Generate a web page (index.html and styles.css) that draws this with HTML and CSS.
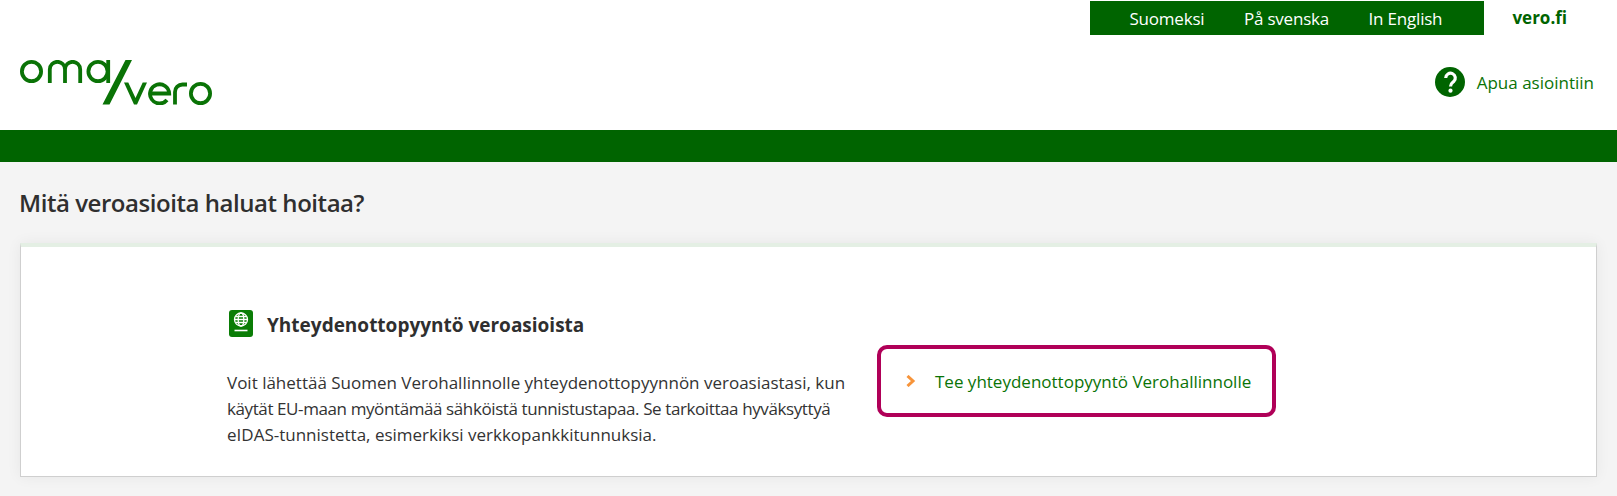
FILE: index.html
```html
<!DOCTYPE html>
<html lang="fi">
<head>
<meta charset="utf-8">
<title>OmaVero</title>
<link rel="stylesheet" href="styles.css">
</head>
<body>
<header class="header">
  <div class="topbar">
    <nav class="langs">
      <a href="#">Suomeksi</a>
      <a href="#">På svenska</a>
      <a href="#">In English</a>
    </nav>
    <a class="vero" href="#">vero.fi</a>
  </div>
  <div class="brandrow">
    <svg class="logo" viewBox="0 0 192 45" role="img" aria-label="OmaVero">
      <g fill="none" stroke="#0a7306" stroke-width="3.8">
        <circle cx="11.5" cy="11.5" r="9.6"/>
        <path d="M29.800 23V9.400a7.600 7.600 0 0 1 15.200 0V23M45 9.400a7.600 7.600 0 0 1 15.200 0V23"/>
        <circle cx="78" cy="11.500" r="9.600"/>
        <path d="M88.200 0V23"/>
        <path d="M130 33.500H149.200A9.600 9.600 0 1 0 147 40"/>
        <path d="M155 44.500V32a7.500 7.500 0 0 1 7.500-7.500H167"/>
        <circle cx="180.500" cy="33.500" r="9.600"/>
      </g>
      <path d="M105.500 0h6.500L89.500 44.500h-7zM104 22.500h4.300L115.500 38l7.200-15.500H127L117 44.500h-3z" fill="#0a7306"/>
    </svg>
    <a class="help" href="#">
      <svg class="help-icon" viewBox="0 0 30 30" aria-hidden="true">
        <circle cx="15" cy="15" r="15" fill="#006400"/>
        <path d="M10.700 11a4.800 4.800 0 1 1 8 3.600c-1.700 1.400-3.200 2.200-3.200 4.900" fill="none" stroke="#fff" stroke-width="3.200"/>
        <circle cx="15.500" cy="23.700" r="2.100" fill="#fff"/>
      </svg>
      <span>Apua asiointiin</span>
    </a>
  </div>
  <div class="band"></div>
</header>
<main class="main">
  <h1 class="heading">Mitä veroasioita haluat hoitaa?</h1>
  <section class="card">
    <div class="content">
      <div class="info">
        <h2 class="title">
          <svg class="passport" viewBox="0 0 24 27" aria-hidden="true">
            <rect width="24" height="27" rx="3" fill="#0a7d06"/>
            <g fill="none" stroke="#fff" stroke-width="1.300">
              <circle cx="12" cy="9.500" r="6.500"/>
              <ellipse cx="12" cy="9.500" rx="2.800" ry="6.500"/>
              <path d="M5.500 9.500h13M6.500 6.500h11M6.500 12.500h11"/>
            </g>
            <path d="M5.500 20.500h13" stroke="#fff" stroke-width="1.600"/>
          </svg>
          <span class="title-text">Yhteydenottopyyntö veroasioista</span>
        </h2>
        <p class="text">Voit lähettää Suomen Verohallinnolle yhteydenottopyynnön veroasiastasi, kun<br><span class="tight">käytät EU-maan myöntämää sähköistä tunnistustapaa. Se tarkoittaa hyväksyttyä</span><br>eIDAS-tunnistetta, esimerkiksi verkkopankkitunnuksia.</p>
      </div>
      <a class="action" href="#">
        <svg class="chev" viewBox="0 0 10 12" aria-hidden="true"><path d="M1.500 1 7 6l-5.500 5" fill="none" stroke="#f7943a" stroke-width="3"/></svg>
        <span>Tee yhteydenottopyyntö Verohallinnolle</span>
      </a>
    </div>
  </section>
</main>
</body>
</html>
```
FILE: styles.css
```css
* { box-sizing: border-box; }
html, body { margin: 0; padding: 0; }
body {
  background: #f4f4f4;
  color: #2f2f2f;
  font-family: "Open Sans", "Noto Sans", sans-serif;
  height: 496px;
  overflow: hidden;
}
a { text-decoration: none; }
.header { background: #fff; }
.topbar {
  display: flex;
  justify-content: flex-end;
  align-items: flex-start;
  padding: 1px 50px 0 0;
  height: 43px;
}
.langs {
  display: flex;
  width: 394px;
  height: 34px;
  background: #006400;
  padding-left: 39px;
  gap: 39.500px;
  align-items: center;
}
.langs a {
  color: #fff;
  font-size: 17px;
  letter-spacing: -0.2px;
}
.vero {
  color: #006400;
  font-size: 17px;
  font-weight: 700;
  margin-left: 28px;
  line-height: 34px;
}
.brandrow {
  height: 87px;
  display: flex;
  justify-content: space-between;
  align-items: flex-start;
  padding: 17px 23px 0 20px;
}
.logo { width: 192px; height: 45px; display: block; }
.help {
  display: flex;
  align-items: center;
  gap: 12px;
  color: #0a7306;
  font-size: 17px;
  margin-top: 7px;
}
.help-icon { width: 30px; height: 30px; display: block; }
.band { height: 32px; background: #006400; }
.main { padding: 0 20px; }
.heading {
  margin: 0 0 0 -1px;
  padding-top: 24px;
  font-size: 24px;
  line-height: 34px;
  font-weight: 600;
  letter-spacing: -0.45px;
  color: #2f2f2f;
}
.card {
  margin-top: 23px;
  height: 234px;
  background: #fff;
  border: 1px solid #cfcfcf;
  border-top: 4px solid #e4efe4;
  box-shadow: 0 0 14px rgba(0, 0, 0, 0.06);
  padding: 63px 0 0 206px;
}
.content {
  display: flex;
  align-items: flex-start;
  gap: 17px;
}
.info { width: 633px; flex: none; }
.title {
  display: flex;
  align-items: center;
  height: 27px;
  gap: 14px;
  margin: 0 0 0 2px;
  font-size: 19px;
  line-height: 27px;
  font-weight: 700;
  color: #2f2f2f;
}
.title-text { padding-top: 4px; }
.passport { width: 24px; height: 27px; display: block; flex: none; }
.text {
  margin: 33px 0 0;
  font-size: 17px;
  line-height: 26px;
  color: #333;
  white-space: nowrap;
}
.tight { letter-spacing: -0.4px; }
.action {
  display: flex;
  align-items: center;
  margin-top: 35px;
  width: 399px;
  height: 72px;
  border: 4px solid #b00058;
  border-radius: 10px;
  padding-left: 25px;
  gap: 19px;
  color: #0a7306;
  font-size: 17px;
}
.chev { width: 10px; height: 12px; display: block; flex: none; }
```
